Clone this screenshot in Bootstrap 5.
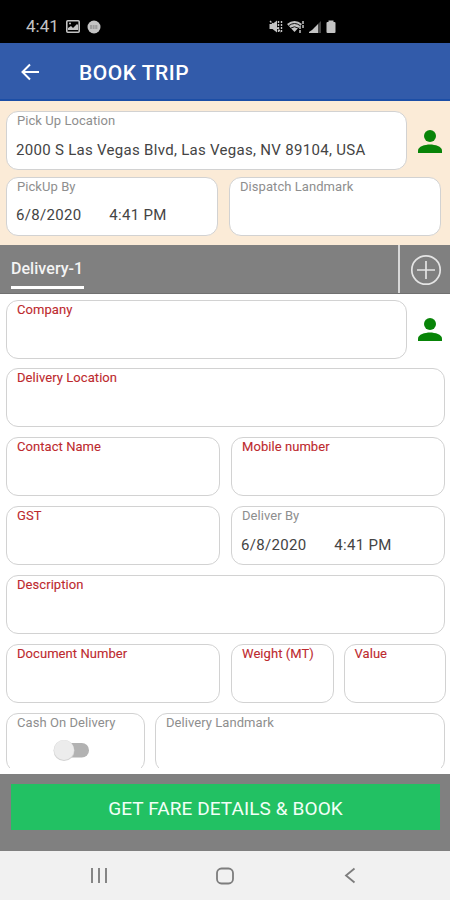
<!DOCTYPE html>
<html lang="en">
<head>
<meta charset="utf-8">
<meta name="viewport" content="width=device-width, initial-scale=1">
<title>Book Trip</title>
<link href="https://cdn.jsdelivr.net/npm/bootstrap@5.3.0/dist/css/bootstrap.min.css" rel="stylesheet">
<style>
body{font-family:Roboto,"Liberation Sans",sans-serif;background:#fff;line-height:1}
svg{display:block;flex:none}
.screen{width:450px;height:900px}
.status{height:43px;background:#000;color:#c4c4c4;padding:10px 113px 0 26px;font-size:17px}
.status .notice{margin-left:7px}
.appbar{height:58px;background:#325baa;border-bottom:2px solid #1c4ea6;padding-left:20px}
.appbar svg{margin-top:1px}
.appbar h1{font-size:21px;font-weight:500;margin:6px 0 0 39px;letter-spacing:.5px}
.pickup{height:144px;background:#fbebd7;padding:10px 6px 0}
.field{height:59px;flex:none;border:1px solid #d2d2d2;border-radius:12px;background:#fff;padding:1px 9px 0 10px}
.cap{display:block;font-size:13px;line-height:15px;color:#8e8e8e;letter-spacing:.06px;white-space:nowrap}
.req{color:#bd2a2e;-webkit-text-stroke:.1px #bd2a2e}
.val{font-size:15px;line-height:18px;color:#444;letter-spacing:.3px;margin:13px 0 0 -1px;white-space:nowrap}
.pickup .val{margin-top:12.500px}
.pickup .g11{margin-top:6.500px}
.time{margin-left:28px}
.person{padding-left:10px}
.tabs{height:49px;background:#808080;border-bottom:1px solid #707070}
.tabname{margin-left:11px;width:73px;height:44px;border-bottom:3px solid #fff;color:#f4f4f4;font-size:16px;font-weight:500;padding-top:16px;white-space:nowrap;letter-spacing:.05px}
.add{width:52px;border-left:2px solid #d8d8d8}
.add svg{margin:2px 0 0 1px}
.form-area{height:474px;overflow:hidden;padding:5.500px 0 0 6px}
.rows{display:flex;flex-direction:column;gap:9.930px;height:469px;overflow:hidden}
.g11{gap:11px}.g10{gap:10px}
.w-full{width:439px}.w-half{width:214px}.w-third{width:102.500px}.w-cod{width:139px}.w-mark{width:290px}
.w-pick{width:212px}
.w-main{width:401px}
.switch-track{width:36px;height:22px;margin:9px 0 0 36px}
.footer-bar{height:77px;background:#808080;padding:10px 10px 0 11px}
.book{height:46px;background:#22c163;color:#f2fff7;border:0;border-radius:0;font-size:19px;line-height:1;padding:2px 0 0;letter-spacing:.1px}
.book:hover{background:#1fb35b;color:#fff}
.sysnav{height:49px;background:#f1f1f1;padding:0 94px 0 90px}
.sysnav .home{margin-right:3px}
</style>
</head>
<body>
<main class="screen d-flex flex-column overflow-hidden">
<header>
<div class="status d-flex align-items-center justify-content-between">
<div class="d-flex align-items-center">
<span>4:41</span>
<svg class="notice" width="14" height="13" viewBox="0 0 14 13"><rect x=".8" y=".8" width="12.4" height="11.4" rx="1" fill="none" stroke="#c4c4c4" stroke-width="1.6"/><path d="M2 10V8l3-2 2 2 4-4 1 1v5z" fill="#c4c4c4"/><circle cx="4" cy="3.5" r="1" fill="#c4c4c4"/></svg>
<svg class="notice" width="14" height="14" viewBox="0 0 14 14"><circle cx="7" cy="7" r="6.5" fill="#c4c4c4"/><path d="M3 6h8M3 8h8" stroke="#777" stroke-width="1" stroke-dasharray="2 .6"/></svg>
</div>
<svg width="68" height="14" viewBox="0 0 68 14" fill="#c4c4c4"><path d="M.5 4h3L8 .5v12L3.500 9h-3z"/><path d="M1 1l11 11M9.500 1v12M12.500 1v12" stroke="#c4c4c4" stroke-width="1.400" stroke-dasharray="2 1" fill="none"/><path d="M18 4q7.500-6 15 0l-7.500 8z"/><path d="M20 5.500q5.500-4 11 0M22 8q3.500-2.500 7 0" stroke="#111" fill="none"/><path d="M31 6v7M34 1v7" stroke="#c4c4c4" stroke-width="1.500" stroke-dasharray="3 1"/><path d="M40 13h3v-3l-3 2zM43 13h3V7l-3 3zM46 13h3V4l-3 3z"/><path d="M49 13h3V1l-3 3z" opacity=".35"/><rect x="57.500" y="2" width="9" height="11" rx="1"/><rect x="59.500" y=".5" width="5" height="3"/></svg>
</div>
<nav class="appbar d-flex align-items-center text-white">
<svg width="20" height="18" viewBox="0 0 20 18" fill="none" stroke="#fff" stroke-width="2"><path d="M19 9H3M10 1.500 2.500 9l7.500 7.500"/></svg>
<h1>BOOK TRIP</h1>
</nav>
</header>
<section class="pickup">
<div class="d-flex align-items-center">
<div class="field w-main"><span class="cap">Pick Up Location</span><div class="val">2000 S Las Vegas Blvd, Las Vegas, NV 89104, USA</div></div>
<div class="person"><svg width="26" height="26" viewBox="0 0 26 26" fill="#088408"><circle cx="13" cy="8" r="6"/><path d="M1 25v-2.500c0-4 7-6 12-6s12 2 12 6V25z"/></svg></div>
</div>
<div class="d-flex g11">
<div class="field w-pick"><span class="cap">PickUp By</span><div class="val">6/8/2020<span class="time">4:41 PM</span></div></div>
<div class="field w-pick"><span class="cap">Dispatch Landmark</span></div>
</div>
</section>
<section class="tabs d-flex justify-content-between">
<div class="tabname">Delivery-1</div>
<div class="add d-flex align-items-center justify-content-center"><svg width="32" height="32" viewBox="0 0 32 32" fill="none" stroke="#e4e4e4" stroke-width="1.700"><circle cx="16" cy="16" r="14.200"/><path d="M16 7v18M7 16h18"/></svg></div>
</section>
<section class="form-area">
<div class="rows">
<div class="d-flex align-items-center">
<div class="field w-main"><span class="cap req">Company</span></div>
<div class="person"><svg width="26" height="26" viewBox="0 0 26 26" fill="#088408"><circle cx="13" cy="8" r="6"/><path d="M1 25v-2.500c0-4 7-6 12-6s12 2 12 6V25z"/></svg></div>
</div>
<div class="field w-full"><span class="cap req">Delivery Location</span></div>
<div class="d-flex g11"><div class="field w-half"><span class="cap req">Contact Name</span></div><div class="field w-half"><span class="cap req">Mobile number</span></div></div>
<div class="d-flex g11"><div class="field w-half"><span class="cap req">GST</span></div><div class="field w-half"><span class="cap">Deliver By</span><div class="val">6/8/2020<span class="time">4:41 PM</span></div></div></div>
<div class="field w-full"><span class="cap req">Description</span></div>
<div class="d-flex g11"><div class="field w-half"><span class="cap req">Document Number</span></div><div class="d-flex g10"><div class="field w-third"><span class="cap req">Weight (MT)</span></div><div class="field w-third"><span class="cap req">Value</span></div></div></div>
<div class="d-flex g10"><div class="field w-cod"><span class="cap">Cash On Delivery</span><svg class="switch-track" viewBox="0 0 36 22"><rect x="8" y="4" width="28" height="14.500" rx="7.200" fill="#b2b2b2"/><circle cx="11" cy="11.500" r="10.500" fill="#d2d2d2"/><circle cx="11" cy="11" r="10" fill="#ececec"/></svg></div><div class="field w-mark"><span class="cap">Delivery Landmark</span></div></div>
</div>
</section>
<footer class="mt-auto">
<div class="footer-bar"><button class="btn book w-100">GET FARE DETAILS &amp; BOOK</button></div>
<div class="sysnav d-flex align-items-center justify-content-between">
<svg width="18" height="17" viewBox="0 0 18 17" stroke="#858585" stroke-width="2"><path d="M2 1v15M9 1v15M16 1v15"/></svg>
<svg class="home" width="20" height="18" viewBox="0 0 20 18" fill="none" stroke="#7d7d7d" stroke-width="1.800"><rect x="2" y="1.500" width="16" height="15" rx="4.500"/></svg>
<svg width="12" height="17" viewBox="0 0 12 17" fill="none" stroke="#7d7d7d" stroke-width="1.800"><path d="M10.500 1.500 2 8.500l8.500 7"/></svg>
</div>
</footer>
</main>
<script src="https://cdn.jsdelivr.net/npm/bootstrap@5.3.0/dist/js/bootstrap.bundle.min.js"></script>
</body>
</html>
